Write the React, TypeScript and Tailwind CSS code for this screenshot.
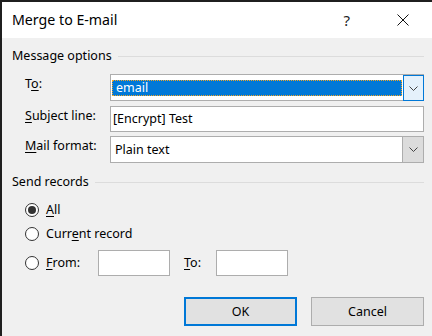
import React from "react";

const Chevron = () => (
  <svg width="9" height="5" viewBox="0 0 9 5" fill="none">
    <path d="M0.5 0.5 L4.5 4.5 L8.5 0.5" stroke="#444" strokeWidth="1" />
  </svg>
);

const Radio = ({ checked }: { checked?: boolean }) => (
  <div className="w-[14px] h-[14px] rounded-full border border-[#333] bg-white flex items-center justify-center shrink-0">
    {checked && <div className="w-[8px] h-[8px] rounded-full bg-[#333]" />}
  </div>
);

const U = ({ children }: { children: React.ReactNode }) => (
  <span className="underline underline-offset-[2px] decoration-1">{children}</span>
);

export default function App() {
  return (
    <div
      className="w-[432px] h-[336px] bg-[#1f1f1f] pl-[2px] pt-[2px] overflow-hidden text-black"
      style={{ fontFamily: '"Noto Sans", "Open Sans", sans-serif' }}
    >
      <div className="h-full flex flex-col bg-[#f0f0f0]">
        {/* Title bar */}
        <div className="h-[36px] shrink-0 bg-white flex items-center pl-[10px] pr-[23px]">
          <span className="flex-1 text-[14.2px] leading-[20px]">Merge to E-mail</span>
          <span className="text-[15px] leading-[20px] text-[#222]">?</span>
          <svg className="ml-[47px]" width="12" height="12" viewBox="0 0 12 12">
            <path d="M0.5 0.5 L11.5 11.5 M11.5 0.5 L0.5 11.5" stroke="#111" strokeWidth="1" />
          </svg>
        </div>

        {/* Body */}
        <div className="flex flex-col pl-[10px] pr-[8px] text-[12.5px] leading-[16px]">
          {/* Message options header */}
          <div className="mt-[10px] h-[16px] flex items-center">
            <span>Message options</span>
            <div className="ml-[6px] flex-1 h-px bg-[#dcdcdc] mt-[1px]" />
          </div>

          {/* To */}
          <div className="mt-[10px] flex items-start">
            <div className="w-[98px] pl-[13px] pt-[2px]">
              T<U>o</U>:
            </div>
            <div className="flex-1 h-[27px] border border-[#adadad] bg-white flex">
              <div className="flex-1 flex items-center pl-[1px] pr-[1px]">
                <div className="w-full h-[16px] bg-[#0078d7] border border-dotted border-[#f5a623] text-white flex items-center pl-[3px]">
                  email
                </div>
              </div>
              <div className="w-[21px] -mr-px -mb-px bg-[#e5f1fb] border border-[#0078d7] flex items-center justify-center">
                <Chevron />
              </div>
            </div>
          </div>

          {/* Subject line */}
          <div className="mt-[5px] flex items-start">
            <div className="w-[98px] pl-[13px] pt-[2px]">
              <U>S</U>ubject line:
            </div>
            <div className="flex-1 h-[26px] border border-[#adadad] bg-white flex items-center pl-[2px]">
              [Encrypt] Test
            </div>
          </div>

          {/* Mail format */}
          <div className="mt-[4px] flex items-start">
            <div className="w-[98px] pl-[13px] pt-[2px]">
              <U>M</U>ail format:
            </div>
            <div className="flex-1 h-[27px] border border-[#adadad] bg-white flex">
              <div className="flex-1 flex items-center pl-[4px]">Plain text</div>
              <div className="w-[21px] bg-[#dcdcdc] border-l border-[#adadad] flex items-center justify-center">
                <Chevron />
              </div>
            </div>
          </div>

          {/* Send records header */}
          <div className="mt-[11px] h-[16px] flex items-center">
            <span>Send records</span>
            <div className="ml-[6px] flex-1 h-px bg-[#dcdcdc] mt-[1px]" />
          </div>

          {/* All */}
          <div className="mt-[12px] h-[16px] flex items-center pl-[13px]">
            <Radio checked />
            <span className="ml-[7px]">
              <U>A</U>ll
            </span>
          </div>

          {/* Current record */}
          <div className="mt-[8px] h-[16px] flex items-center pl-[13px]">
            <Radio />
            <span className="ml-[7px]">
              Curr<U>e</U>nt record
            </span>
          </div>

          {/* From / To */}
          <div className="mt-[8px] h-[26px] flex items-center">
            <div className="w-[86px] flex items-center pl-[13px]">
              <Radio />
              <span className="ml-[7px]">
                <U>F</U>rom:
              </span>
            </div>
            <div className="w-[72px] h-[26px] border border-[#adadad] bg-white" />
            <div className="ml-[14px] w-[32px]">
              <U>T</U>o:
            </div>
            <div className="w-[72px] h-[26px] border border-[#adadad] bg-white" />
          </div>

          {/* Buttons */}
          <div className="mt-[21px] flex justify-end gap-[14px]">
            <div className="w-[113px] h-[29px] bg-[#e1e1e1] border-2 border-[#0078d7] flex items-center justify-center">
              OK
            </div>
            <div className="w-[113px] h-[29px] bg-[#e1e1e1] border border-[#adadad] flex items-center justify-center">
              Cancel
            </div>
          </div>
        </div>
      </div>
    </div>
  );
}
